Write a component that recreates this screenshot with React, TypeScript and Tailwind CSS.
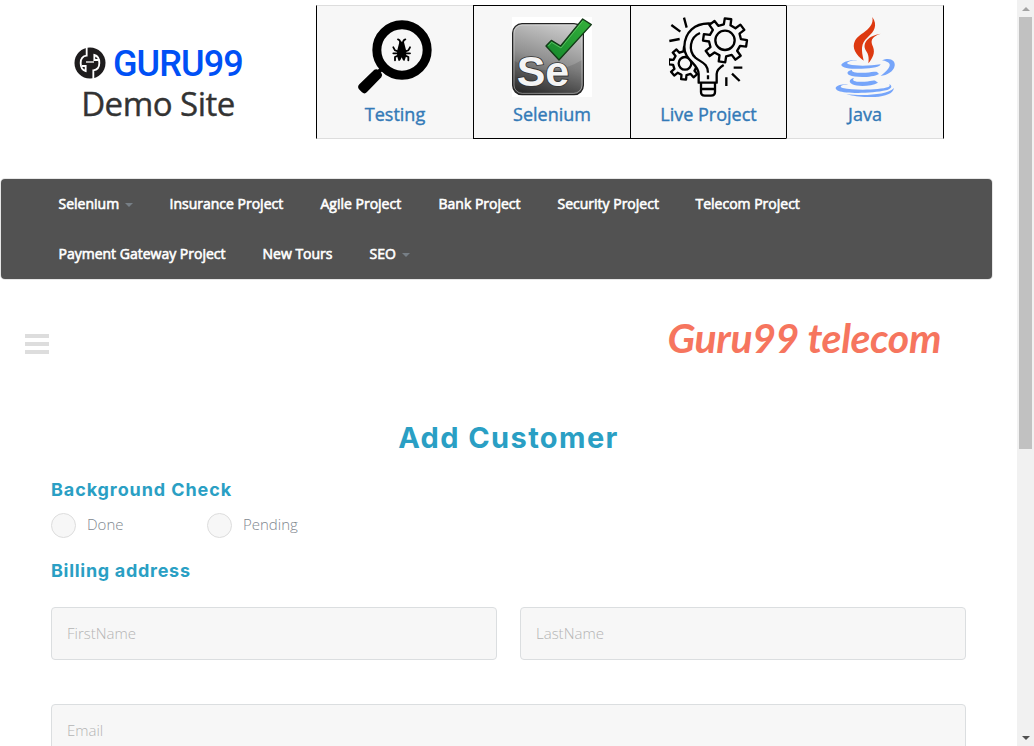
import React from "react";

function gearPath(cx: number, cy: number, outer: number, root: number, teeth: number, turn: number) {
  const pts: string[] = [];
  const step = (Math.PI * 2) / teeth;
  for (let i = 0; i < teeth; i++) {
    const a = i * step + (turn * Math.PI) / 180;
    const corners: [number, number][] = [
      [root, -0.27],
      [outer, -0.19],
      [outer, 0.19],
      [root, 0.27],
    ];
    corners.forEach(([r, k]) => {
      const t = a + k * step;
      pts.push(`${(cx + r * Math.sin(t)).toFixed(1)} ${(cy - r * Math.cos(t)).toFixed(1)}`);
    });
  }
  return `M${pts.join("L")}Z`;
}

function TestingIcon() {
  return (
    <svg className="block size-20" viewBox="135 51 240 240">
      <circle cx="276" cy="150" r="75.5" fill="none" stroke="#000" strokeWidth="27" />
      <path d="M222 199L200 222" stroke="#000" strokeWidth="12" />
      <path d="M193 209Q200 205 206 211L214 219Q219 225 214 232L171 276Q164 284 156 277L147 268Q141 261 148 253Z" />
      <path d="M268 127Q275 122 282 127L288 150Q291 168 283 183Q279 184 275 172Q271 184 266 183Q259 168 262 150Z" />
      <g fill="none" stroke="#000" strokeWidth="5.5" strokeLinecap="round">
        <path d="M271 128Q270 119 264 118M279 128Q280 119 286 118M264 154L255 151L250 142M286 154L295 151L300 142M262 160H250M288 160H300M264 167L255 171V181M286 167L295 171V181" />
      </g>
    </svg>
  );
}

function SeleniumIcon() {
  return (
    <svg className="block size-20 bg-white" viewBox="126 51 240 240">
      <defs>
        <linearGradient id="se-body" x1="0.6" y1="0" x2="0.3" y2="1">
          <stop offset="0" stopColor="#c9c9c9" />
          <stop offset="0.5" stopColor="#909090" />
          <stop offset="1" stopColor="#333" />
        </linearGradient>
        <linearGradient id="se-check" x1="0" y1="1" x2="1" y2="0">
          <stop offset="0" stopColor="#13862b" />
          <stop offset="1" stopColor="#35b23c" />
        </linearGradient>
      </defs>
      <rect x="128" y="71" width="212" height="213" rx="28" fill="url(#se-body)" stroke="#222" strokeWidth="4" />
      <path d="M132 182Q240 240 336 180V256Q336 280 312 280H156Q132 280 132 256Z" fill="#000" opacity="0.12" />
      <rect x="132" y="75" width="204" height="205" rx="25" fill="none" stroke="#eee" strokeWidth="2" opacity="0.65" />
      <text
        x="140"
        y="257"
        fontSize="129"
        fontWeight="700"
        fill="#f4f4f4"
        stroke="#333"
        strokeWidth="5"
        paintOrder="stroke"
        className="font-['Liberation_Sans',sans-serif]"
      >
        Se
      </text>
      <path d="M228 138L244 121L272 138L338 57L364 74L267 180Z" fill="url(#se-check)" stroke="#123a16" strokeWidth="4" strokeLinejoin="round" />
      <path d="M235 138L245 127L273 144L338 63" fill="none" stroke="#8de08c" strokeWidth="1.5" />
    </svg>
  );
}

function LiveProjectIcon() {
  return (
    <svg className="block size-20" viewBox="133 51 240 240" fill="none" stroke="#000" strokeWidth="7" strokeLinejoin="round">
      <path d={gearPath(181, 190, 49, 36, 8, 5)} />
      <circle cx="181" cy="190" r="19" />
      <path
        d="M262 71C209 66 180 98 179 140C178 182 222 190 222 222V248H276V222C276 210 284 203 297 195L330 120Z"
        fill="#f7f7f7"
        stroke="none"
      />
      <path d="M262 71C209 66 180 98 179 140C178 182 222 190 222 222V248H276V222C276 210 284 203 297 195" />
      <path d="M226 99C195 112 190 152 212 173C231 188 250 190 250 218M250 226V238" />
      <path d={gearPath(301, 121, 66, 48, 8, 8)} fill="#f7f7f7" />
      <circle cx="301" cy="121" r="29" />
      <path d="M229 249V276Q229 287 240 287H259Q271 287 271 276V249M229 267H271" />
      <path d="M140 75L167 95M178 53L186 83M134 123L165 117M327 203H353M322 221L345 243M305 232V258" />
    </svg>
  );
}

function JavaIcon() {
  return (
    <svg className="block size-20" viewBox="120 51 240 240">
      <g fill="#dd3910">
        <path d="M262 51C279 76 268 94 249 111C226 131 229 150 236 182C213 165 199 143 210 122C224 98 269 88 262 51Z" />
        <path d="M287 101C256 111 257 124 264 140C272 160 261 176 250 190C252 174 251 163 243 152C230 130 249 107 287 101Z" />
      </g>
      <g fill="#76a5fa">
        <path d="M218 180C190 183 180 188 191 193C221 200 258 197 287 193C283 206 232 207 201 206C176 204 164 197 171 191C181 182 203 180 218 180Z" />
        <path d="M291 181C316 170 332 183 329 197C326 215 305 225 287 228C301 217 316 204 314 193C312 186 301 183 291 181Z" />
        <path d="M201 210C197 218 221 219 242 218C261 217 270 214 276 216L282 222C260 234 210 233 194 226C181 219 190 212 201 210Z" />
        <path d="M207 234C197 244 217 247 239 245C257 244 266 239 272 243L279 248C258 260 217 260 202 253C187 244 197 236 207 234Z" />
        <path d="M190 252C168 255 161 260 173 264C208 272 285 270 310 261C317 257 313 254 313 252C326 260 316 268 303 271C260 281 182 281 161 273C142 264 155 252 190 252Z" />
        <path d="M327 264C324 281 302 289 270 291C235 293 201 288 184 282C230 288 307 286 327 264Z" />
      </g>
    </svg>
  );
}

const markHalf = "M80 50V78Q62 80 62 100Q62 120 77 124V109H66";

function GuruMark() {
  return (
    <svg className="block size-8" viewBox="42 52 96 96">
      <circle cx="90" cy="100" r="46.5" fill="#1e1c1d" />
      <g fill="none" stroke="#fff" strokeWidth="5.5">
        <path d={markHalf} />
        <path d={markHalf} transform="rotate(180 90 100)" />
        <path d="M78 97H102" strokeWidth="4" />
      </g>
    </svg>
  );
}

const tiles = [
  { label: "Testing", icon: <TestingIcon />, box: "w-[157px] border-l border-l-black border-y-[#ddd]" },
  { label: "Selenium", icon: <SeleniumIcon />, box: "w-[157px] border-l border-black" },
  { label: "Live Project", icon: <LiveProjectIcon />, box: "w-[156px] border-l border-black" },
  { label: "Java", icon: <JavaIcon />, box: "w-[158px] border-x border-x-black border-y-[#ddd]" },
];

const navRows = [
  [
    { label: "Selenium", caret: true, w: "w-[111px]" },
    { label: "Insurance Project", w: "w-[151px]" },
    { label: "Agile Project", w: "w-[118px]" },
    { label: "Bank Project", w: "w-[119px]" },
    { label: "Security Project", w: "w-[138px]" },
    { label: "Telecom Project", w: "w-[140px]" },
  ],
  [
    { label: "Payment Gateway Project", w: "w-[204px]" },
    { label: "New Tours", w: "w-[107px]" },
    { label: "SEO", caret: true, w: "w-[80px]" },
  ],
];

function Field({ name }: { name: string }) {
  return (
    <input
      placeholder={name}
      className="h-[53px] w-full min-w-0 rounded-[4px] border border-[#dbdee0] bg-[#f7f7f7] px-[15px] pb-px text-[15px] font-light outline-none placeholder:text-[#b4b4b4]"
    />
  );
}

function RadioOption({ label }: { label: string }) {
  return (
    <label className="flex w-[156px] items-center">
      <span className="mt-px size-[25px] rounded-full border border-[#ddd] bg-[#f7f7f7]" />
      <span className="ml-[11px] pb-[2px] text-[15px] leading-6 font-light text-[#7f888f]">{label}</span>
    </label>
  );
}

export default function App() {
  return (
    <div className="flex h-[746px] w-[1034px] overflow-hidden bg-white font-['Open_Sans',sans-serif]">
      <div className="flex w-[1017px] flex-col">
        <header className="flex h-[179px] shrink-0 pt-[5px]">
          <div className="flex w-[316px] flex-col items-center pt-[37px]">
            <div className="flex h-[42px] w-[316px] items-center pl-[74px] whitespace-nowrap">
              <GuruMark />
              <span className="ml-[7px] pt-[3px] font-['Roboto',sans-serif] text-[36px] leading-[39px] font-medium tracking-[-0.9px] text-[#0050f5]">GURU99</span>
            </div>
            <div className="text-[33px] leading-[40px] tracking-[-0.5px] text-[#333] [-webkit-text-stroke:0.4px_#333]">Demo Site</div>
          </div>
          <div className="flex">
            {tiles.map((t) => (
              <a key={t.label} className={`flex h-[134px] flex-col items-center border-y bg-[#f7f7f7] pt-[11px] ${t.box}`}>
                {t.icon}
                <span className="mt-1 text-[18px] leading-[26px] text-[#337ab7] [-webkit-text-stroke:0.4px_#337ab7]">{t.label}</span>
              </a>
            ))}
          </div>
        </header>

        <nav className="ml-px h-[100px] w-[991px] shrink-0 rounded-[4px] bg-[#525252] pl-[57.5px] ring-1 ring-[#e7e7e7]">
          {navRows.map((row, i) => (
            <div key={i} className="flex h-[50px] items-center pb-[2px]">
              {row.map((item) => (
                <a key={item.label} className={`flex shrink-0 items-center text-[14px] whitespace-nowrap text-white [-webkit-text-stroke:0.6px_#fff] ${item.w}`}>
                  {item.label}
                  {item.caret && <span className="mt-[3px] ml-[6px] border-x-4 border-t-4 border-x-transparent border-t-[#777f86]" />}
                </a>
              ))}
            </div>
          ))}
        </nav>

        <div className="flex h-[130px] shrink-0 items-center justify-between pr-[76px] pl-[25px]">
          <div className="flex w-6 flex-col gap-1">
            <span className="h-1 bg-[#ddd]" />
            <span className="h-1 bg-[#ddd]" />
            <span className="h-1 bg-[#ddd]" />
          </div>
          <span className="pb-3 font-['Lato',cursive] text-[41px] leading-[60px] font-bold tracking-[-0.4px] text-[#f6755e] italic">Guru99 telecom</span>
        </div>

        <main className="flex flex-col pr-[51px] pl-[51px]">
          <h1 className="mt-[9px] text-center font-['Inter',sans-serif] text-[29px] leading-10 font-bold tracking-[1.4px] text-[#2a9fc4]">Add Customer</h1>
          <h2 className="mt-[20px] font-['Inter',sans-serif] text-[18px] leading-6 font-bold tracking-[0.9px] text-[#2a9fc4]">Background Check</h2>
          <div className="mt-[10px] flex h-[26px] items-center">
            <RadioOption label="Done" />
            <RadioOption label="Pending" />
          </div>
          <h2 className="mt-[21px] font-['Inter',sans-serif] text-[18px] leading-6 font-bold tracking-[0.7px] text-[#2a9fc4]">Billing address</h2>
          <div className="mt-6 grid grid-cols-2 gap-x-[23px]">
            <Field name="FirstName" />
            <Field name="LastName" />
          </div>
          <div className="mt-11">
            <Field name="Email" />
          </div>
        </main>
      </div>

      <div className="flex w-[17px] flex-col items-center justify-between bg-[#f1f1f1]">
        <div className="flex flex-col items-center">
          <div className="flex h-[17px] items-center">
            <span className="border-x-4 border-b-4 border-x-transparent border-b-[#a3a3a3]" />
          </div>
          <div className="h-[432px] w-[13px] bg-[#c1c1c1]" />
        </div>
        <div className="flex h-[17px] items-center">
          <span className="border-x-4 border-t-4 border-x-transparent border-t-[#505050]" />
        </div>
      </div>
    </div>
  );
}
